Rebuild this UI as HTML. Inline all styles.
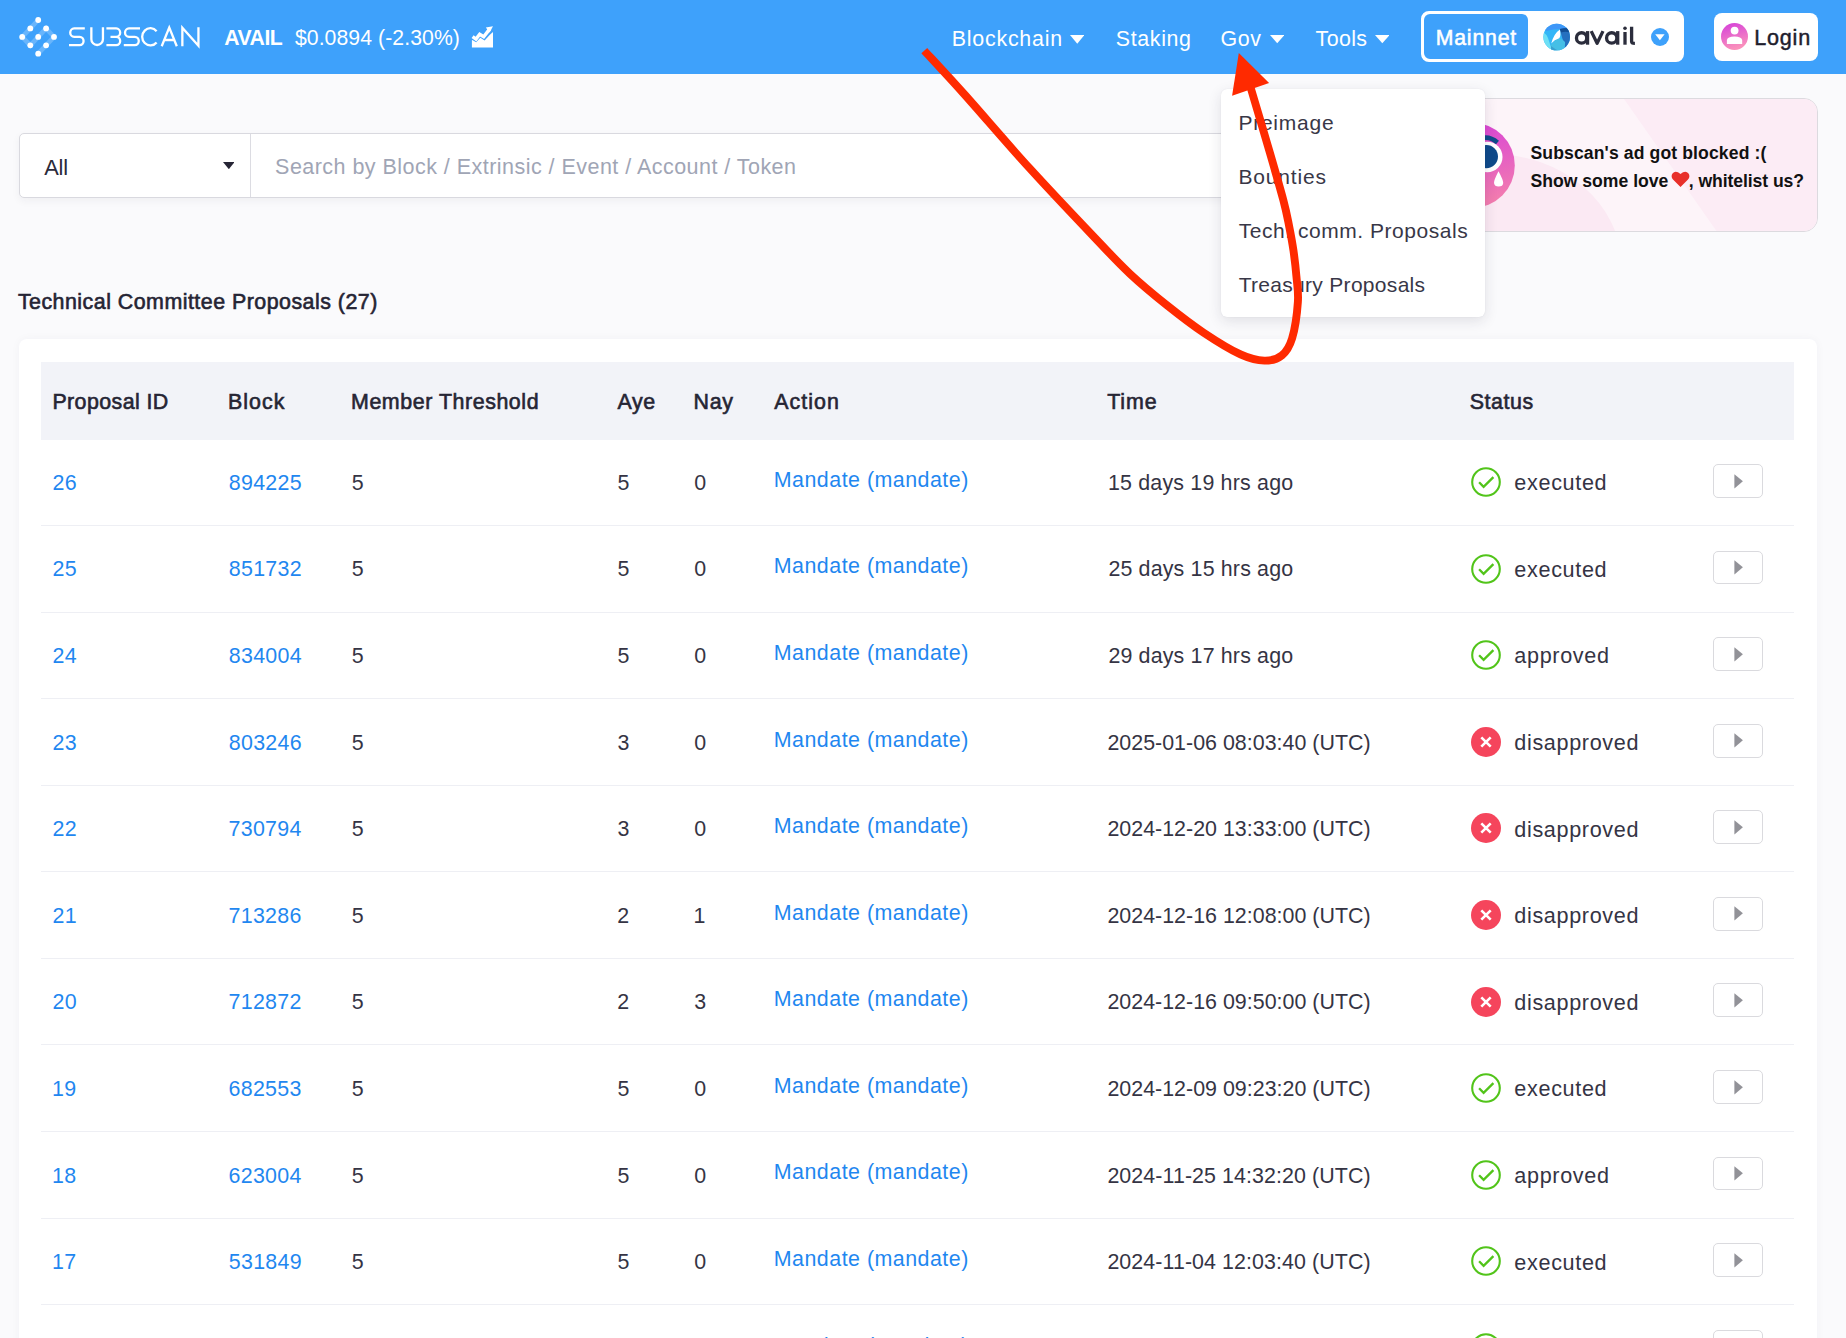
<!DOCTYPE html>
<html><head><meta charset="utf-8"><style>
html,body{margin:0;padding:0;}
body{width:1846px;height:1338px;overflow:hidden;position:relative;background:#fafafc;font-family:'Liberation Sans', sans-serif;}
.t{position:absolute;white-space:nowrap;font-family:'Liberation Sans', sans-serif;}
</style></head><body>
<div style="position:absolute;left:0;top:0;width:1846px;height:73.7px;background:#3ea1fb"></div>
<svg style="position:absolute;left:0;top:0" width="70" height="70" viewBox="0 0 70 70"><polyline points="38.2,20.0 22.2,36.9 30.3,45.3 46.1,28.4 54.0,36.9 38.2,53.7" stroke="#fff" stroke-opacity="0.22" stroke-width="4.6" fill="none" stroke-linejoin="miter"/><circle cx="38.2" cy="20.0" r="2.9" fill="#fff"/><circle cx="30.3" cy="28.4" r="2.9" fill="#fff"/><circle cx="46.1" cy="28.4" r="2.9" fill="#fff"/><circle cx="22.2" cy="36.9" r="2.9" fill="#fff"/><circle cx="38.2" cy="36.9" r="2.9" fill="#fff"/><circle cx="54.0" cy="36.9" r="2.9" fill="#fff"/><circle cx="30.3" cy="45.3" r="2.9" fill="#fff"/><circle cx="46.1" cy="45.3" r="2.9" fill="#fff"/><circle cx="38.2" cy="53.7" r="2.9" fill="#fff"/></svg>
<svg style="position:absolute;left:0;top:0" width="210" height="60" viewBox="0 0 210 60"><g stroke="#fff" stroke-width="2.3" fill="none" stroke-linecap="butt"><path d="M84.8 28.45 H74.2 A4.18 4.18 0 0 0 74.2 36.8 H79.6 A4.18 4.18 0 0 1 79.6 45.15 H69"/><path d="M91.35 27.3 V39.2 A5.8 5.8 0 0 0 102.95 39.2 V27.3"/><path d="M106.4 28.45 H116.2 A4.18 4.18 0 0 1 116.2 36.8 H110.5 M116.2 36.8 A4.18 4.18 0 0 1 116.2 45.15 H106.4"/><path d="M140 28.45 H129 A4.18 4.18 0 0 0 129 36.8 H134.8 A4.18 4.18 0 0 1 134.8 45.15 H123.8"/><path d="M156.6 31.2 A8.2 8.6 0 1 0 156.6 42.4"/><path d="M161.7 46.3 L169.25 27.6 L176.8 46.3 M164.8 40 H173.4"/><path d="M182.35 46.3 V27.8 L198.45 45.8 V27.3"/></g></svg>
<div class="t" style="left:224.20px;top:27.40px;font-size:21.2px;line-height:21.2px;font-weight:bold;color:#fff;letter-spacing:-0.450px;">AVAIL</div>
<div class="t" style="left:294.90px;top:27.40px;font-size:21.2px;line-height:21.2px;color:#fff;letter-spacing:0.087px;">$0.0894 (-2.30%)</div>
<svg style="position:absolute;left:465px;top:20px" width="35" height="32" viewBox="465 20 35 32"><path d="M471.9 47.5 L493 47.5 L493 32 L489.9 34.8 L484.6 40.6 L480.3 37.7 L476.2 42.2 L472.2 40.1 L471.9 40.1 Z" fill="#fff"/><path d="M472.6 36.6 L476 39.1 L479.7 34.2 L483.7 36.7 L490 28.6" stroke="#fff" stroke-width="3.4" fill="none" stroke-linejoin="miter"/><path d="M485.8 27.6 L493 26.2 L489.6 32.5 Z" fill="#fff"/></svg>
<div class="t" style="left:951.70px;top:28.70px;font-size:21.4px;line-height:21.4px;color:#fff;letter-spacing:0.778px;">Blockchain</div>
<svg style="position:absolute;left:1069.9px;top:35.1px" width="14.5" height="8.799999999999997" viewBox="0 0 14.5 8.799999999999997"><path d="M0 0 L14.5 0 L7.25 8.799999999999997 Z" fill="#fff"/></svg>
<div class="t" style="left:1115.80px;top:28.70px;font-size:21.4px;line-height:21.4px;color:#fff;letter-spacing:0.633px;">Staking</div>
<div class="t" style="left:1220.60px;top:28.90px;font-size:21.4px;line-height:21.4px;color:#fff;letter-spacing:0.600px;">Gov</div>
<svg style="position:absolute;left:1269.9px;top:35.4px" width="14.399999999999864" height="8.300000000000004" viewBox="0 0 14.399999999999864 8.300000000000004"><path d="M0 0 L14.399999999999864 0 L7.199999999999932 8.300000000000004 Z" fill="#fff"/></svg>
<div class="t" style="left:1315.60px;top:28.90px;font-size:21.4px;line-height:21.4px;color:#fff;letter-spacing:0.375px;">Tools</div>
<svg style="position:absolute;left:1374.8px;top:35.4px" width="14.600000000000136" height="8.300000000000004" viewBox="0 0 14.600000000000136 8.300000000000004"><path d="M0 0 L14.600000000000136 0 L7.300000000000068 8.300000000000004 Z" fill="#fff"/></svg>
<div style="position:absolute;left:1421px;top:10.9px;width:263px;height:50.7px;box-sizing:border-box;border:3px solid #fff;border-radius:8px;background:#fff"></div>
<div style="position:absolute;left:1424.2px;top:13.8px;width:103.8px;height:44.9px;border-radius:6px;background:#3ea1fb"></div>
<div class="t" style="left:1435.70px;top:27.10px;font-size:21.2px;line-height:21.2px;color:#fff;letter-spacing:0.850px;-webkit-text-stroke:0.55px #fff;">Mainnet</div>
<svg style="position:absolute;left:1540px;top:21px" width="34" height="32" viewBox="1540 21 34 32"><defs><clipPath id="avc"><circle cx="1556.7" cy="37" r="13.3"/></clipPath></defs><g clip-path="url(#avc)"><rect x="1540" y="21" width="34" height="32" fill="#33b6f7"/><path d="M1540 21 H1574 V29.5 Q1556 28 1546 31 Z" fill="#3e97f8"/><path d="M1540 30 Q1546 33 1548 38 Q1550 44 1552.5 52 H1540 Z" fill="#6ee0f5"/><path d="M1559.8 29 Q1565 27.5 1572 28 V53 H1566 Q1564 45 1563.5 42 Q1561.5 36 1559.8 29 Z" fill="#2570bf"/><path d="M1559.8 29 Q1565 27.5 1572 28 V33 Q1566 31 1561 32.5 Z" fill="#124f95"/><path d="M1551 45 Q1556 38.5 1559.5 38.2 Q1563 39.5 1565 42 Q1565.5 47 1563 53 H1552 Q1551 49 1551 45 Z" fill="#45bfe6"/><path d="M1551 46 Q1556 50 1563 53 H1551 Z" fill="#3a9fd0"/><path d="M1551.2 43.5 Q1553.8 33.5 1559.9 29.4 Q1561.2 35.5 1559.2 38.3 Q1554.5 39.5 1551.2 43.5 Z" fill="#fff"/></g></svg>
<svg style="position:absolute;left:1570px;top:20px" width="70" height="30" viewBox="1570 20 70 30"><g stroke="#2b2d3c" stroke-width="3.3" fill="none"><circle cx="1581.6" cy="37.9" r="5.15"/><path d="M1587.55 31.1 V44.7"/><path d="M1591.2 31.1 L1597.1 43.2 L1603 31.1" stroke-linejoin="round"/><circle cx="1611.7" cy="37.9" r="5.15"/><path d="M1617.7 31.1 V44.7"/><path d="M1625 32 V44.7"/><path d="M1631.6 26.8 V41.5 Q1631.6 43.4 1634.9 43.4" /></g><circle cx="1625" cy="28.2" r="1.8" fill="#2b2d3c"/></svg>
<svg style="position:absolute;left:1651px;top:27.9px" width="18" height="18" viewBox="0 0 18 18"><circle cx="9" cy="9" r="9" fill="#3ea1fb"/><path d="M4.2 6.3 L13.6 6.3 L8.9 12.2 Z" fill="#fff"/></svg>
<div style="position:absolute;left:1713.9px;top:12.8px;width:104.1px;height:48px;border-radius:8px;background:#fff"></div>
<svg style="position:absolute;left:1720.9px;top:23px" width="27" height="27" viewBox="0 0 27 27"><defs><linearGradient id="lg" x1="0" y1="0" x2="0.3" y2="1"><stop offset="0" stop-color="#d43ddb"/><stop offset="1" stop-color="#fa90bc"/></linearGradient></defs><circle cx="13.5" cy="13.5" r="13.5" fill="url(#lg)"/><circle cx="13.6" cy="7.6" r="3.9" fill="#fff"/><path d="M5.9 21 L5.9 17 Q6.5 13.5 13.5 13.5 Q20.5 13.5 21.2 17 L21.2 21 Z" fill="#fff"/></svg>
<div class="t" style="left:1754.20px;top:26.50px;font-size:21.6px;line-height:21.6px;color:#1e1d2d;letter-spacing:0.800px;-webkit-text-stroke:0.45px #1e1d2d;">Login</div>
<div style="position:absolute;left:19.3px;top:133.2px;width:1460px;height:64.6px;box-sizing:border-box;border:1px solid #d9d9df;border-radius:5px;background:#fff;box-shadow:0 3px 8px rgba(30,30,60,0.05)"></div>
<div style="position:absolute;left:250px;top:134.2px;width:1px;height:62.6px;background:#dcdce2"></div>
<div class="t" style="left:44.20px;top:156.70px;font-size:21.8px;line-height:21.8px;color:#2b2a3a;letter-spacing:-0.200px;">All</div>
<svg style="position:absolute;left:222.6px;top:161.8px" width="11.700000000000017" height="7.199999999999989" viewBox="0 0 11.700000000000017 7.199999999999989"><path d="M0 0 L11.700000000000017 0 L5.8500000000000085 7.199999999999989 Z" fill="#262535"/></svg>
<div class="t" style="left:275.10px;top:157.35px;font-size:21.5px;line-height:21.5px;color:#a0a5b5;letter-spacing:0.465px;">Search by Block / Extrinsic / Event / Account / Token</div>
<div style="position:absolute;left:1440px;top:98.3px;width:378px;height:134px;box-sizing:border-box;border:1.5px solid #dcdadf;border-radius:14px;overflow:hidden;background:#fdf4f9"><div style="position:absolute;left:155px;top:-40px;width:400px;height:400px;transform:rotate(-35deg);transform-origin:0 0;background:#fcecf5"></div><div style="position:absolute;left:-80px;top:55px;width:260px;height:220px;border-radius:50%;background:#fbe9f3"></div></div>
<svg style="position:absolute;left:1425px;top:118px" width="95" height="95" viewBox="1425 118 95 95"><defs><linearGradient id="bg2" x1="0" y1="0" x2="0.2" y2="1"><stop offset="0" stop-color="#d63fd9"/><stop offset="1" stop-color="#f27bb0"/></linearGradient></defs><circle cx="1472.2" cy="165.4" r="42.6" fill="url(#bg2)"/><circle cx="1487.3" cy="157" r="15.2" fill="#fff"/><circle cx="1486.4" cy="156.6" r="11.6" fill="#0f4a8a"/><path d="M1475 141 Q1487 133.5 1497.5 142.5" stroke="#0f4a8a" stroke-width="4.5" fill="none"/><path d="M1498.5 171.3 Q1493.9 180 1494 183 Q1494.5 186.5 1498.6 186.5 Q1503 186.5 1503.2 183 Q1503.2 180 1498.5 171.3Z" fill="#fff"/></svg>
<div class="t" style="left:1530.50px;top:145.30px;font-size:17.6px;line-height:17.6px;font-weight:bold;color:#111;letter-spacing:0.112px;">Subscan's ad got blocked :(</div>
<div class="t" style="left:1530.50px;top:172.50px;font-size:17.6px;line-height:17.6px;font-weight:bold;color:#111;letter-spacing:0.000px;">Show some love</div>
<svg style="position:absolute;left:1671px;top:170px" width="19" height="18" viewBox="0 0 19 18"><path d="M9.5 17 L2 9.5 Q-0.5 6.5 1.5 3.5 Q4.5 0 9.5 4 Q14.5 0 17.5 3.5 Q19.5 6.5 17 9.5 Z" fill="#e8302a"/></svg>
<div class="t" style="left:1688.80px;top:172.50px;font-size:17.6px;line-height:17.6px;font-weight:bold;color:#111;letter-spacing:-0.079px;">, whitelist us?</div>
<div class="t" style="left:17.90px;top:291.80px;font-size:21.4px;line-height:21.4px;color:#252434;letter-spacing:0.479px;-webkit-text-stroke:0.6px #252434;">Technical Committee Proposals (27)</div>
<div style="position:absolute;left:19px;top:338.5px;width:1798px;height:1100px;background:#fff;border-radius:8px;box-shadow:0 0 10px rgba(40,40,80,0.04)"></div>
<div style="position:absolute;left:41px;top:362px;width:1752.8px;height:77.8px;background:#f2f3f8"></div>
<div class="t" style="left:52.40px;top:392.00px;font-size:21.4px;line-height:21.4px;color:#262534;letter-spacing:0.410px;-webkit-text-stroke:0.6px #262534;">Proposal ID</div>
<div class="t" style="left:227.90px;top:392.00px;font-size:21.4px;line-height:21.4px;color:#262534;letter-spacing:1.075px;-webkit-text-stroke:0.6px #262534;">Block</div>
<div class="t" style="left:351.00px;top:392.00px;font-size:21.4px;line-height:21.4px;color:#262534;letter-spacing:0.560px;-webkit-text-stroke:0.6px #262534;">Member Threshold</div>
<div class="t" style="left:617.60px;top:392.00px;font-size:21.4px;line-height:21.4px;color:#262534;letter-spacing:0.550px;-webkit-text-stroke:0.6px #262534;">Aye</div>
<div class="t" style="left:693.60px;top:392.00px;font-size:21.4px;line-height:21.4px;color:#262534;letter-spacing:0.600px;-webkit-text-stroke:0.6px #262534;">Nay</div>
<div class="t" style="left:774.20px;top:392.00px;font-size:21.4px;line-height:21.4px;color:#262534;letter-spacing:1.060px;-webkit-text-stroke:0.6px #262534;">Action</div>
<div class="t" style="left:1107.20px;top:392.00px;font-size:21.4px;line-height:21.4px;color:#262534;letter-spacing:0.900px;-webkit-text-stroke:0.6px #262534;">Time</div>
<div class="t" style="left:1469.70px;top:392.00px;font-size:21.4px;line-height:21.4px;color:#262534;letter-spacing:0.580px;-webkit-text-stroke:0.6px #262534;">Status</div>
<div class="t" style="left:52.50px;top:472.90px;font-size:21.4px;line-height:21.4px;color:#1f87f0;letter-spacing:0.280px;">26</div>
<div class="t" style="left:228.80px;top:472.90px;font-size:21.4px;line-height:21.4px;color:#1f87f0;letter-spacing:0.280px;">894225</div>
<div class="t" style="left:351.70px;top:472.90px;font-size:21.4px;line-height:21.4px;color:#353444;letter-spacing:0.280px;">5</div>
<div class="t" style="left:617.50px;top:472.90px;font-size:21.4px;line-height:21.4px;color:#353444;letter-spacing:0.280px;">5</div>
<div class="t" style="left:694.20px;top:472.90px;font-size:21.4px;line-height:21.4px;color:#353444;letter-spacing:0.280px;">0</div>
<div class="t" style="left:773.80px;top:469.80px;font-size:21.4px;line-height:21.4px;color:#1f87f0;letter-spacing:0.488px;">Mandate (mandate)</div>
<div class="t" style="left:1107.90px;top:472.90px;font-size:21.4px;line-height:21.4px;color:#353444;letter-spacing:0.194px;">15 days 19 hrs ago</div>
<div class="t" style="left:1514.30px;top:472.30px;font-size:21.6px;line-height:21.6px;color:#353444;letter-spacing:0.671px;">executed</div>
<div style="position:absolute;left:41px;top:525.00px;width:1752.8px;height:1px;background:#eeeff4"></div>
<svg style="position:absolute;left:1469px;top:465.10px" width="34" height="34" viewBox="0 0 34 34"><circle cx="17" cy="17" r="13.8" stroke="#52c41a" stroke-width="2.1" fill="none"/><path d="M10.1 17.2 L14.6 21.9 L24.4 12.1" stroke="#52c41a" stroke-width="2.3" fill="none"/></svg>
<div style="position:absolute;left:1713.4px;top:464.00px;width:49.8px;height:33.8px;box-sizing:border-box;border:1px solid #dadade;border-radius:5px;background:#fff"></div>
<svg style="position:absolute;left:1734px;top:473.50px" width="10" height="15" viewBox="0 0 10 15"><path d="M0.4 0.3 L8.9 7.3 L0.4 14.6 Z" fill="#929298"/></svg>
<div class="t" style="left:52.50px;top:559.48px;font-size:21.4px;line-height:21.4px;color:#1f87f0;letter-spacing:0.280px;">25</div>
<div class="t" style="left:228.80px;top:559.48px;font-size:21.4px;line-height:21.4px;color:#1f87f0;letter-spacing:0.280px;">851732</div>
<div class="t" style="left:351.70px;top:559.48px;font-size:21.4px;line-height:21.4px;color:#353444;letter-spacing:0.280px;">5</div>
<div class="t" style="left:617.50px;top:559.48px;font-size:21.4px;line-height:21.4px;color:#353444;letter-spacing:0.280px;">5</div>
<div class="t" style="left:694.20px;top:559.48px;font-size:21.4px;line-height:21.4px;color:#353444;letter-spacing:0.280px;">0</div>
<div class="t" style="left:773.80px;top:556.38px;font-size:21.4px;line-height:21.4px;color:#1f87f0;letter-spacing:0.488px;">Mandate (mandate)</div>
<div class="t" style="left:1108.40px;top:559.48px;font-size:21.4px;line-height:21.4px;color:#353444;letter-spacing:0.165px;">25 days 15 hrs ago</div>
<div class="t" style="left:1514.30px;top:558.88px;font-size:21.6px;line-height:21.6px;color:#353444;letter-spacing:0.671px;">executed</div>
<div style="position:absolute;left:41px;top:611.58px;width:1752.8px;height:1px;background:#eeeff4"></div>
<svg style="position:absolute;left:1469px;top:551.68px" width="34" height="34" viewBox="0 0 34 34"><circle cx="17" cy="17" r="13.8" stroke="#52c41a" stroke-width="2.1" fill="none"/><path d="M10.1 17.2 L14.6 21.9 L24.4 12.1" stroke="#52c41a" stroke-width="2.3" fill="none"/></svg>
<div style="position:absolute;left:1713.4px;top:550.58px;width:49.8px;height:33.8px;box-sizing:border-box;border:1px solid #dadade;border-radius:5px;background:#fff"></div>
<svg style="position:absolute;left:1734px;top:560.08px" width="10" height="15" viewBox="0 0 10 15"><path d="M0.4 0.3 L8.9 7.3 L0.4 14.6 Z" fill="#929298"/></svg>
<div class="t" style="left:52.50px;top:646.06px;font-size:21.4px;line-height:21.4px;color:#1f87f0;letter-spacing:0.280px;">24</div>
<div class="t" style="left:228.80px;top:646.06px;font-size:21.4px;line-height:21.4px;color:#1f87f0;letter-spacing:0.280px;">834004</div>
<div class="t" style="left:351.70px;top:646.06px;font-size:21.4px;line-height:21.4px;color:#353444;letter-spacing:0.280px;">5</div>
<div class="t" style="left:617.50px;top:646.06px;font-size:21.4px;line-height:21.4px;color:#353444;letter-spacing:0.280px;">5</div>
<div class="t" style="left:694.20px;top:646.06px;font-size:21.4px;line-height:21.4px;color:#353444;letter-spacing:0.280px;">0</div>
<div class="t" style="left:773.80px;top:642.96px;font-size:21.4px;line-height:21.4px;color:#1f87f0;letter-spacing:0.488px;">Mandate (mandate)</div>
<div class="t" style="left:1108.40px;top:646.06px;font-size:21.4px;line-height:21.4px;color:#353444;letter-spacing:0.165px;">29 days 17 hrs ago</div>
<div class="t" style="left:1514.30px;top:645.46px;font-size:21.6px;line-height:21.6px;color:#353444;letter-spacing:0.657px;">approved</div>
<div style="position:absolute;left:41px;top:698.16px;width:1752.8px;height:1px;background:#eeeff4"></div>
<svg style="position:absolute;left:1469px;top:638.26px" width="34" height="34" viewBox="0 0 34 34"><circle cx="17" cy="17" r="13.8" stroke="#52c41a" stroke-width="2.1" fill="none"/><path d="M10.1 17.2 L14.6 21.9 L24.4 12.1" stroke="#52c41a" stroke-width="2.3" fill="none"/></svg>
<div style="position:absolute;left:1713.4px;top:637.16px;width:49.8px;height:33.8px;box-sizing:border-box;border:1px solid #dadade;border-radius:5px;background:#fff"></div>
<svg style="position:absolute;left:1734px;top:646.66px" width="10" height="15" viewBox="0 0 10 15"><path d="M0.4 0.3 L8.9 7.3 L0.4 14.6 Z" fill="#929298"/></svg>
<div class="t" style="left:52.50px;top:732.64px;font-size:21.4px;line-height:21.4px;color:#1f87f0;letter-spacing:0.280px;">23</div>
<div class="t" style="left:228.80px;top:732.64px;font-size:21.4px;line-height:21.4px;color:#1f87f0;letter-spacing:0.280px;">803246</div>
<div class="t" style="left:351.70px;top:732.64px;font-size:21.4px;line-height:21.4px;color:#353444;letter-spacing:0.280px;">5</div>
<div class="t" style="left:617.60px;top:732.64px;font-size:21.4px;line-height:21.4px;color:#353444;letter-spacing:0.280px;">3</div>
<div class="t" style="left:694.20px;top:732.64px;font-size:21.4px;line-height:21.4px;color:#353444;letter-spacing:0.280px;">0</div>
<div class="t" style="left:773.80px;top:729.54px;font-size:21.4px;line-height:21.4px;color:#1f87f0;letter-spacing:0.488px;">Mandate (mandate)</div>
<div class="t" style="left:1107.40px;top:732.64px;font-size:21.4px;line-height:21.4px;color:#353444;letter-spacing:0.017px;">2025-01-06 08:03:40 (UTC)</div>
<div class="t" style="left:1514.30px;top:732.04px;font-size:21.6px;line-height:21.6px;color:#353444;letter-spacing:0.650px;">disapproved</div>
<div style="position:absolute;left:41px;top:784.74px;width:1752.8px;height:1px;background:#eeeff4"></div>
<svg style="position:absolute;left:1469px;top:724.84px" width="34" height="34" viewBox="0 0 34 34"><circle cx="17" cy="17" r="15" fill="#f5455c"/><path d="M12.3 12.3 L21.7 21.7 M21.7 12.3 L12.3 21.7" stroke="#fff" stroke-width="2.6"/></svg>
<div style="position:absolute;left:1713.4px;top:723.74px;width:49.8px;height:33.8px;box-sizing:border-box;border:1px solid #dadade;border-radius:5px;background:#fff"></div>
<svg style="position:absolute;left:1734px;top:733.24px" width="10" height="15" viewBox="0 0 10 15"><path d="M0.4 0.3 L8.9 7.3 L0.4 14.6 Z" fill="#929298"/></svg>
<div class="t" style="left:52.50px;top:819.22px;font-size:21.4px;line-height:21.4px;color:#1f87f0;letter-spacing:0.280px;">22</div>
<div class="t" style="left:228.60px;top:819.22px;font-size:21.4px;line-height:21.4px;color:#1f87f0;letter-spacing:0.280px;">730794</div>
<div class="t" style="left:351.70px;top:819.22px;font-size:21.4px;line-height:21.4px;color:#353444;letter-spacing:0.280px;">5</div>
<div class="t" style="left:617.60px;top:819.22px;font-size:21.4px;line-height:21.4px;color:#353444;letter-spacing:0.280px;">3</div>
<div class="t" style="left:694.20px;top:819.22px;font-size:21.4px;line-height:21.4px;color:#353444;letter-spacing:0.280px;">0</div>
<div class="t" style="left:773.80px;top:816.12px;font-size:21.4px;line-height:21.4px;color:#1f87f0;letter-spacing:0.488px;">Mandate (mandate)</div>
<div class="t" style="left:1107.40px;top:819.22px;font-size:21.4px;line-height:21.4px;color:#353444;letter-spacing:0.017px;">2024-12-20 13:33:00 (UTC)</div>
<div class="t" style="left:1514.30px;top:818.62px;font-size:21.6px;line-height:21.6px;color:#353444;letter-spacing:0.650px;">disapproved</div>
<div style="position:absolute;left:41px;top:871.32px;width:1752.8px;height:1px;background:#eeeff4"></div>
<svg style="position:absolute;left:1469px;top:811.42px" width="34" height="34" viewBox="0 0 34 34"><circle cx="17" cy="17" r="15" fill="#f5455c"/><path d="M12.3 12.3 L21.7 21.7 M21.7 12.3 L12.3 21.7" stroke="#fff" stroke-width="2.6"/></svg>
<div style="position:absolute;left:1713.4px;top:810.32px;width:49.8px;height:33.8px;box-sizing:border-box;border:1px solid #dadade;border-radius:5px;background:#fff"></div>
<svg style="position:absolute;left:1734px;top:819.82px" width="10" height="15" viewBox="0 0 10 15"><path d="M0.4 0.3 L8.9 7.3 L0.4 14.6 Z" fill="#929298"/></svg>
<div class="t" style="left:52.50px;top:905.80px;font-size:21.4px;line-height:21.4px;color:#1f87f0;letter-spacing:0.280px;">21</div>
<div class="t" style="left:228.60px;top:905.80px;font-size:21.4px;line-height:21.4px;color:#1f87f0;letter-spacing:0.280px;">713286</div>
<div class="t" style="left:351.70px;top:905.80px;font-size:21.4px;line-height:21.4px;color:#353444;letter-spacing:0.280px;">5</div>
<div class="t" style="left:617.30px;top:905.80px;font-size:21.4px;line-height:21.4px;color:#353444;letter-spacing:0.280px;">2</div>
<div class="t" style="left:693.40px;top:905.80px;font-size:21.4px;line-height:21.4px;color:#353444;letter-spacing:0.280px;">1</div>
<div class="t" style="left:773.80px;top:902.70px;font-size:21.4px;line-height:21.4px;color:#1f87f0;letter-spacing:0.488px;">Mandate (mandate)</div>
<div class="t" style="left:1107.40px;top:905.80px;font-size:21.4px;line-height:21.4px;color:#353444;letter-spacing:0.017px;">2024-12-16 12:08:00 (UTC)</div>
<div class="t" style="left:1514.30px;top:905.20px;font-size:21.6px;line-height:21.6px;color:#353444;letter-spacing:0.650px;">disapproved</div>
<div style="position:absolute;left:41px;top:957.90px;width:1752.8px;height:1px;background:#eeeff4"></div>
<svg style="position:absolute;left:1469px;top:898.00px" width="34" height="34" viewBox="0 0 34 34"><circle cx="17" cy="17" r="15" fill="#f5455c"/><path d="M12.3 12.3 L21.7 21.7 M21.7 12.3 L12.3 21.7" stroke="#fff" stroke-width="2.6"/></svg>
<div style="position:absolute;left:1713.4px;top:896.90px;width:49.8px;height:33.8px;box-sizing:border-box;border:1px solid #dadade;border-radius:5px;background:#fff"></div>
<svg style="position:absolute;left:1734px;top:906.40px" width="10" height="15" viewBox="0 0 10 15"><path d="M0.4 0.3 L8.9 7.3 L0.4 14.6 Z" fill="#929298"/></svg>
<div class="t" style="left:52.50px;top:992.38px;font-size:21.4px;line-height:21.4px;color:#1f87f0;letter-spacing:0.280px;">20</div>
<div class="t" style="left:228.60px;top:992.38px;font-size:21.4px;line-height:21.4px;color:#1f87f0;letter-spacing:0.280px;">712872</div>
<div class="t" style="left:351.70px;top:992.38px;font-size:21.4px;line-height:21.4px;color:#353444;letter-spacing:0.280px;">5</div>
<div class="t" style="left:617.30px;top:992.38px;font-size:21.4px;line-height:21.4px;color:#353444;letter-spacing:0.280px;">2</div>
<div class="t" style="left:694.20px;top:992.38px;font-size:21.4px;line-height:21.4px;color:#353444;letter-spacing:0.280px;">3</div>
<div class="t" style="left:773.80px;top:989.28px;font-size:21.4px;line-height:21.4px;color:#1f87f0;letter-spacing:0.488px;">Mandate (mandate)</div>
<div class="t" style="left:1107.40px;top:992.38px;font-size:21.4px;line-height:21.4px;color:#353444;letter-spacing:0.017px;">2024-12-16 09:50:00 (UTC)</div>
<div class="t" style="left:1514.30px;top:991.78px;font-size:21.6px;line-height:21.6px;color:#353444;letter-spacing:0.650px;">disapproved</div>
<div style="position:absolute;left:41px;top:1044.48px;width:1752.8px;height:1px;background:#eeeff4"></div>
<svg style="position:absolute;left:1469px;top:984.58px" width="34" height="34" viewBox="0 0 34 34"><circle cx="17" cy="17" r="15" fill="#f5455c"/><path d="M12.3 12.3 L21.7 21.7 M21.7 12.3 L12.3 21.7" stroke="#fff" stroke-width="2.6"/></svg>
<div style="position:absolute;left:1713.4px;top:983.48px;width:49.8px;height:33.8px;box-sizing:border-box;border:1px solid #dadade;border-radius:5px;background:#fff"></div>
<svg style="position:absolute;left:1734px;top:992.98px" width="10" height="15" viewBox="0 0 10 15"><path d="M0.4 0.3 L8.9 7.3 L0.4 14.6 Z" fill="#929298"/></svg>
<div class="t" style="left:52.00px;top:1078.96px;font-size:21.4px;line-height:21.4px;color:#1f87f0;letter-spacing:0.280px;">19</div>
<div class="t" style="left:228.60px;top:1078.96px;font-size:21.4px;line-height:21.4px;color:#1f87f0;letter-spacing:0.280px;">682553</div>
<div class="t" style="left:351.70px;top:1078.96px;font-size:21.4px;line-height:21.4px;color:#353444;letter-spacing:0.280px;">5</div>
<div class="t" style="left:617.50px;top:1078.96px;font-size:21.4px;line-height:21.4px;color:#353444;letter-spacing:0.280px;">5</div>
<div class="t" style="left:694.20px;top:1078.96px;font-size:21.4px;line-height:21.4px;color:#353444;letter-spacing:0.280px;">0</div>
<div class="t" style="left:773.80px;top:1075.86px;font-size:21.4px;line-height:21.4px;color:#1f87f0;letter-spacing:0.488px;">Mandate (mandate)</div>
<div class="t" style="left:1107.40px;top:1078.96px;font-size:21.4px;line-height:21.4px;color:#353444;letter-spacing:0.017px;">2024-12-09 09:23:20 (UTC)</div>
<div class="t" style="left:1514.30px;top:1078.36px;font-size:21.6px;line-height:21.6px;color:#353444;letter-spacing:0.671px;">executed</div>
<div style="position:absolute;left:41px;top:1131.06px;width:1752.8px;height:1px;background:#eeeff4"></div>
<svg style="position:absolute;left:1469px;top:1071.16px" width="34" height="34" viewBox="0 0 34 34"><circle cx="17" cy="17" r="13.8" stroke="#52c41a" stroke-width="2.1" fill="none"/><path d="M10.1 17.2 L14.6 21.9 L24.4 12.1" stroke="#52c41a" stroke-width="2.3" fill="none"/></svg>
<div style="position:absolute;left:1713.4px;top:1070.06px;width:49.8px;height:33.8px;box-sizing:border-box;border:1px solid #dadade;border-radius:5px;background:#fff"></div>
<svg style="position:absolute;left:1734px;top:1079.56px" width="10" height="15" viewBox="0 0 10 15"><path d="M0.4 0.3 L8.9 7.3 L0.4 14.6 Z" fill="#929298"/></svg>
<div class="t" style="left:52.00px;top:1165.54px;font-size:21.4px;line-height:21.4px;color:#1f87f0;letter-spacing:0.280px;">18</div>
<div class="t" style="left:228.60px;top:1165.54px;font-size:21.4px;line-height:21.4px;color:#1f87f0;letter-spacing:0.280px;">623004</div>
<div class="t" style="left:351.70px;top:1165.54px;font-size:21.4px;line-height:21.4px;color:#353444;letter-spacing:0.280px;">5</div>
<div class="t" style="left:617.50px;top:1165.54px;font-size:21.4px;line-height:21.4px;color:#353444;letter-spacing:0.280px;">5</div>
<div class="t" style="left:694.20px;top:1165.54px;font-size:21.4px;line-height:21.4px;color:#353444;letter-spacing:0.280px;">0</div>
<div class="t" style="left:773.80px;top:1162.44px;font-size:21.4px;line-height:21.4px;color:#1f87f0;letter-spacing:0.488px;">Mandate (mandate)</div>
<div class="t" style="left:1107.40px;top:1165.54px;font-size:21.4px;line-height:21.4px;color:#353444;letter-spacing:0.083px;">2024-11-25 14:32:20 (UTC)</div>
<div class="t" style="left:1514.30px;top:1164.94px;font-size:21.6px;line-height:21.6px;color:#353444;letter-spacing:0.657px;">approved</div>
<div style="position:absolute;left:41px;top:1217.64px;width:1752.8px;height:1px;background:#eeeff4"></div>
<svg style="position:absolute;left:1469px;top:1157.74px" width="34" height="34" viewBox="0 0 34 34"><circle cx="17" cy="17" r="13.8" stroke="#52c41a" stroke-width="2.1" fill="none"/><path d="M10.1 17.2 L14.6 21.9 L24.4 12.1" stroke="#52c41a" stroke-width="2.3" fill="none"/></svg>
<div style="position:absolute;left:1713.4px;top:1156.64px;width:49.8px;height:33.8px;box-sizing:border-box;border:1px solid #dadade;border-radius:5px;background:#fff"></div>
<svg style="position:absolute;left:1734px;top:1166.14px" width="10" height="15" viewBox="0 0 10 15"><path d="M0.4 0.3 L8.9 7.3 L0.4 14.6 Z" fill="#929298"/></svg>
<div class="t" style="left:52.00px;top:1252.12px;font-size:21.4px;line-height:21.4px;color:#1f87f0;letter-spacing:0.280px;">17</div>
<div class="t" style="left:228.80px;top:1252.12px;font-size:21.4px;line-height:21.4px;color:#1f87f0;letter-spacing:0.280px;">531849</div>
<div class="t" style="left:351.70px;top:1252.12px;font-size:21.4px;line-height:21.4px;color:#353444;letter-spacing:0.280px;">5</div>
<div class="t" style="left:617.50px;top:1252.12px;font-size:21.4px;line-height:21.4px;color:#353444;letter-spacing:0.280px;">5</div>
<div class="t" style="left:694.20px;top:1252.12px;font-size:21.4px;line-height:21.4px;color:#353444;letter-spacing:0.280px;">0</div>
<div class="t" style="left:773.80px;top:1249.02px;font-size:21.4px;line-height:21.4px;color:#1f87f0;letter-spacing:0.488px;">Mandate (mandate)</div>
<div class="t" style="left:1107.40px;top:1252.12px;font-size:21.4px;line-height:21.4px;color:#353444;letter-spacing:0.083px;">2024-11-04 12:03:40 (UTC)</div>
<div class="t" style="left:1514.30px;top:1251.52px;font-size:21.6px;line-height:21.6px;color:#353444;letter-spacing:0.671px;">executed</div>
<div style="position:absolute;left:41px;top:1304.22px;width:1752.8px;height:1px;background:#eeeff4"></div>
<svg style="position:absolute;left:1469px;top:1244.32px" width="34" height="34" viewBox="0 0 34 34"><circle cx="17" cy="17" r="13.8" stroke="#52c41a" stroke-width="2.1" fill="none"/><path d="M10.1 17.2 L14.6 21.9 L24.4 12.1" stroke="#52c41a" stroke-width="2.3" fill="none"/></svg>
<div style="position:absolute;left:1713.4px;top:1243.22px;width:49.8px;height:33.8px;box-sizing:border-box;border:1px solid #dadade;border-radius:5px;background:#fff"></div>
<svg style="position:absolute;left:1734px;top:1252.72px" width="10" height="15" viewBox="0 0 10 15"><path d="M0.4 0.3 L8.9 7.3 L0.4 14.6 Z" fill="#929298"/></svg>
<div class="t" style="left:773.80px;top:1335.60px;font-size:21.4px;line-height:21.4px;color:#1f87f0;letter-spacing:0.488px;">Mandate (mandate)</div>
<svg style="position:absolute;left:1469px;top:1330.90px" width="34" height="34" viewBox="0 0 34 34"><circle cx="17" cy="17" r="13.8" stroke="#52c41a" stroke-width="2.1" fill="none"/><path d="M10.1 17.2 L14.6 21.9 L24.4 12.1" stroke="#52c41a" stroke-width="2.3" fill="none"/></svg>
<div style="position:absolute;left:1713.4px;top:1329.80px;width:49.8px;height:33.8px;box-sizing:border-box;border:1px solid #dadade;border-radius:5px;background:#fff"></div>
<svg style="position:absolute;left:1734px;top:1339.30px" width="10" height="15" viewBox="0 0 10 15"><path d="M0.4 0.3 L8.9 7.3 L0.4 14.6 Z" fill="#929298"/></svg>
<div style="position:absolute;left:1221px;top:88.6px;width:264.1px;height:228.2px;background:#fff;border-radius:6px;box-shadow:0 4px 14px rgba(30,30,60,0.12), 0 0 1px rgba(30,30,60,0.12)"></div>
<div class="t" style="left:1238.40px;top:111.70px;font-size:21px;line-height:21px;color:#383747;letter-spacing:0.757px;">Preimage</div>
<div class="t" style="left:1238.40px;top:165.90px;font-size:21px;line-height:21px;color:#383747;letter-spacing:0.843px;">Bounties</div>
<div class="t" style="left:1238.70px;top:219.60px;font-size:21px;line-height:21px;color:#383747;letter-spacing:0.535px;">Tech. comm. Proposals</div>
<div class="t" style="left:1238.70px;top:273.80px;font-size:21px;line-height:21px;color:#383747;letter-spacing:0.300px;">Treasury Proposals</div>
<svg style="position:absolute;left:0;top:0" width="1846" height="1338" viewBox="0 0 1846 1338"><path d="M924.3 50.6 C931.1 58.0 947.4 75.3 965 95 C982.6 114.7 1008.3 144.9 1030 168.7 C1051.7 192.5 1078.3 220.5 1095 238 C1111.7 255.5 1118.0 262.6 1130 273.8 C1142.0 285.0 1154.5 295.3 1166.8 305.1 C1179.1 314.9 1191.4 324.5 1203.7 332.7 C1216.0 340.9 1230.4 349.8 1240.5 354.4 C1250.6 359.0 1257.5 360.5 1264.4 360.6 C1271.3 360.8 1277.3 359.0 1281.9 355.3 C1286.5 351.6 1289.4 347.2 1292.1 338.3 C1294.8 329.4 1297.2 312.0 1297.9 301.7 C1298.6 291.4 1297.1 284.8 1296.4 276.3 C1295.7 267.8 1294.7 259.3 1293.5 250.8 C1292.3 242.3 1290.7 233.9 1289 225.4 C1287.3 216.9 1286.5 212.0 1283.3 200 C1280.1 188.0 1275.3 171.4 1270 153.2 C1264.7 134.9 1255.5 104.0 1251.5 90.5 C1247.5 77.0 1246.9 75.1 1246 72" stroke="#ff2a00" stroke-width="7.9" fill="none" stroke-linecap="butt"/><path d="M1238.8 53.1 L1269.1 83.1 L1232.1 95.7 Z" fill="#ff2a00"/></svg>
</body></html>
